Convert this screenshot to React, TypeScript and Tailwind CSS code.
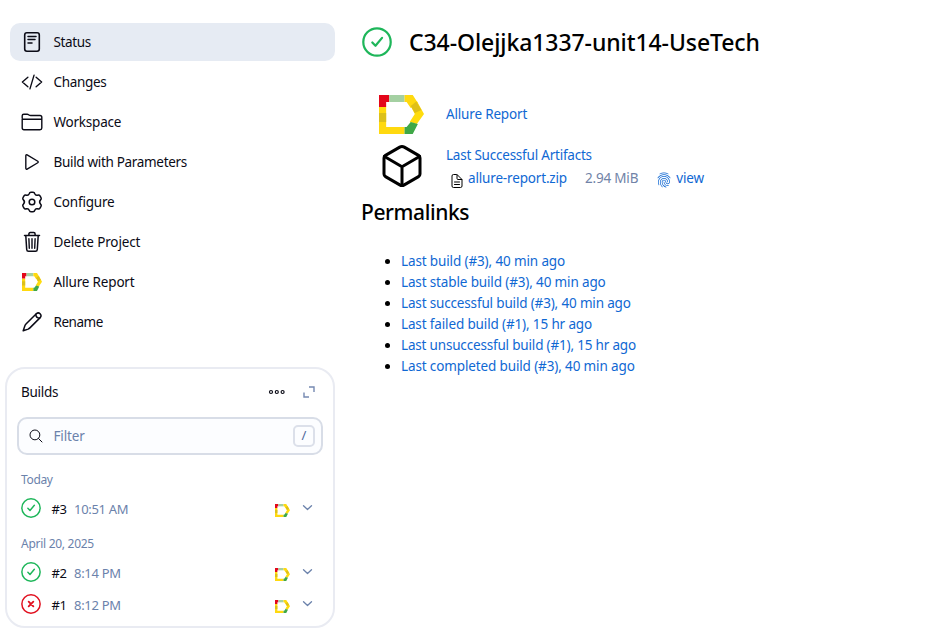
import React from "react";
import {
  IoCodeSlashOutline,
  IoCubeOutline,
  IoDocumentTextOutline,
  IoFingerPrintOutline,
  IoPlayOutline,
  IoSearchOutline,
} from "react-icons/io5";

function Allure({ className }: { className: string }) {
  return (
    <svg viewBox="0 0 44 39" className={className} preserveAspectRatio="none">
      <path d="M0 12H7V32H25V39H0Z" fill="#ffd90f" />
      <path d="M0 18H7V27H0Z" fill="#dcc01a" />
      <path d="M0 0H10V7H7V12H0Z" fill="#e3061a" />
      <path d="M10 0H25V7H10Z" fill="#a4d0a2" />
      <path d="M25 0H33L38 8L31 13L27 7H25Z" fill="#ffd90f" />
      <path d="M37 6L44 19L37 29L30 27L35 19L31 11Z" fill="#ffdc0d" />
      <path d="M36.500 6.500L41.500 15L35 18L31 11Z" fill="#dfc017" />
      <path d="M31 27L38 29L33 39H25V32H27Z" fill="#3fa847" />
    </svg>
  );
}

function Ring({ ok, className }: { ok: boolean; className: string }) {
  return (
    <svg
      viewBox="0 0 512 512"
      className={className}
      fill="none"
      stroke={ok ? "#1eb65a" : "#e1101f"}
      strokeWidth="38"
      strokeLinecap="round"
      strokeLinejoin="round"
    >
      <circle cx="256" cy="256" r="234" />
      {ok ? <path d="M342 186L230 320L176 264" /> : <path d="M316 316L196 196M196 316L316 196" strokeWidth="46" />}
    </svg>
  );
}

function StatusIcon() {
  return (
    <svg viewBox="0 0 22 22" className="size-[22px]" fill="none" stroke="currentColor" strokeLinecap="round">
      <rect x="3.700" y="1.700" width="14.600" height="18.600" rx="2.200" strokeWidth="1.600" />
      <path d="M7 5.500H15M7 8.500H14M7 12H11" strokeWidth="1.500" />
    </svg>
  );
}

function Folder() {
  return (
    <svg viewBox="0 0 22 22" className="size-[22px]" fill="none" stroke="currentColor" strokeWidth="1.400" strokeLinejoin="round">
      <path d="M1.200 7.500V4.800Q1.200 3.200 2.800 3.200H6.200Q7 3.200 7.600 3.700L8.300 4.200Q8.800 4.500 9.600 4.500H19Q20.800 4.500 20.800 6.300V17Q20.800 18.700 19 18.700H3Q1.200 18.700 1.200 17V8.200H20.800" />
    </svg>
  );
}

function Trash() {
  return (
    <svg viewBox="0 0 22 22" className="size-[22px]" fill="none" stroke="currentColor" strokeWidth="1.500" strokeLinecap="round" strokeLinejoin="round">
      <path d="M3.500 4.600H18.500M7.900 4.400V3Q7.900 1.600 9.300 1.600H12.700Q14.100 1.600 14.100 3V4.400M4.800 4.800L5.700 18.500Q5.800 20.300 7.500 20.300H14.500Q16.200 20.300 16.300 18.500L17.200 4.800" />
      <path d="M11 7.700V17.200M7.900 7.700L8.300 17.200M14.100 7.700L13.700 17.200" strokeWidth="1.400" />
    </svg>
  );
}

function Gear() {
  return (
    <svg viewBox="0 0 22 22" className="size-[22px]" fill="none" stroke="currentColor" strokeWidth="1.500" strokeLinejoin="round">
      <circle cx="11" cy="11" r="2.800" />
      <path d="M8.200 2.800Q8.600 1.300 10 1.300H12Q13.400 1.300 13.800 2.800Q14.500 4.600 16.400 4.200Q18.300 3.700 19 4.900L20 6.600Q20.700 7.900 19.600 8.900Q17.500 11 19.600 13.100Q20.700 14.100 20 15.400L19 17.100Q18.300 18.300 16.400 17.800Q14.500 17.400 13.800 19.200Q13.400 20.700 12 20.700H10Q8.600 20.700 8.200 19.200Q7.500 17.400 5.600 17.800Q3.700 18.300 3 17.100L2 15.400Q1.300 14.100 2.400 13.100Q4.500 11 2.400 8.900Q1.300 7.900 2 6.600L3 4.900Q3.700 3.700 5.600 4.200Q7.500 4.600 8.200 2.800Z" />
    </svg>
  );
}

function Pencil() {
  return (
    <svg viewBox="0 0 22 22" className="size-[22px]" fill="none" stroke="currentColor" strokeWidth="1.500" strokeLinecap="round" strokeLinejoin="round">
      <path d="M2.200 19.800L3.800 14.900Q4.200 13.800 5 13L15.300 2.700Q17.300 1 19.100 2.800Q20.900 4.600 19.200 6.600L8.900 16.900Q8.100 17.700 7.100 18.100Z" />
      <path d="M14.800 3.200Q14.800 7 18.700 7.100" />
    </svg>
  );
}

const menu = [
  { label: "Status", icon: <StatusIcon />, track: "tracking-[-0.370px]" },
  { label: "Changes", icon: <IoCodeSlashOutline className="size-[22px]" />, track: "tracking-[-0.340px]" },
  { label: "Workspace", icon: <Folder />, track: "tracking-[-0.220px]" },
  { label: "Build with Parameters", icon: <IoPlayOutline className="size-[22px]" />, track: "tracking-[-0.320px]" },
  { label: "Configure", icon: <Gear />, track: "tracking-[-0.200px]" },
  { label: "Delete Project", icon: <Trash />, track: "tracking-[-0.130px]" },
  { label: "Allure Report", icon: <Allure className="h-[18px] w-5" />, track: "tracking-[-0.180px]" },
  { label: "Rename", icon: <Pencil />, track: "tracking-[-0.460px]" },
];

const links = [
  { text: "Last build (#3), 40 min ago", track: "tracking-[-0.130px]" },
  { text: "Last stable build (#3), 40 min ago", track: "tracking-[-0.140px]" },
  { text: "Last successful build (#3), 40 min ago", track: "tracking-[-0.160px]" },
  { text: "Last failed build (#1), 15 hr ago", track: "tracking-[-0.140px]" },
  { text: "Last unsuccessful build (#1), 15 hr ago", track: "tracking-[-0.180px]" },
  { text: "Last completed build (#3), 40 min ago", track: "tracking-[-0.130px]" },
];

function Build({ ok, id, time }: { ok: boolean; id: string; time: string }) {
  return (
    <div className="flex h-8 items-center pr-5 pl-[14px]">
      <Ring ok={ok} className="mb-1 size-5" />
      <span className="ml-[10.500px] w-[22.500px] text-[13px] tracking-[-0.450px]">{id}</span>
      <span className="text-[13px] tracking-[-0.300px] text-[#6b82ab]">{time}</span>
      <Allure className="ml-auto h-[13px] w-[15px]" />
      <svg viewBox="0 0 11 11" className="mb-[5px] ml-3 size-[11px]" fill="none" stroke="#6b82ab" strokeWidth="1.300" strokeLinecap="round" strokeLinejoin="round">
        <path d="M1.500 3.700L5.500 7.500L9.500 3.700" />
      </svg>
    </div>
  );
}

export default function App() {
  return (
    <div className="flex h-[628px] w-[930px] overflow-hidden bg-white font-['Noto_Sans','Open_Sans',sans-serif] text-[13.500px] text-[#0b0b16]">
      <aside className="w-[335px] shrink-0 pt-[23px] pl-[5px]">
        <nav className="flex flex-col gap-0.5 pl-[5px]">
          {menu.map((m, i) => (
            <a key={m.label} className={`flex h-[38px] items-center rounded-[10px] pl-[11px] ${i === 0 ? "bg-[#e6ebf3]" : ""}`}>
              <span className="flex w-[22px] justify-center">{m.icon}</span>
              <span className={`ml-[10.500px] ${m.track}`}>{m.label}</span>
            </a>
          ))}
        </nav>
        <section className="mt-[26px] h-[261px] rounded-[20px] border-2 border-[#e9ebf2] text-[13px]">
          <div className="flex h-[46px] items-center pr-[18px] pl-[14px]">
            <span className="mt-px text-[13.500px] tracking-[-0.300px]">Builds</span>
            <svg viewBox="0 0 18 6" className="ml-auto h-1.5 w-[18px]" fill="none" stroke="currentColor" strokeWidth="1.200">
              <circle cx="3" cy="3" r="1.500" />
              <circle cx="8.800" cy="3" r="1.500" />
              <circle cx="14.600" cy="3" r="1.500" />
            </svg>
            <svg viewBox="0 0 12 12" className="ml-[17px] size-3" fill="none" stroke="#7589b1" strokeWidth="1.400">
              <path d="M6 1H11V6M1 6.500V11H6" />
            </svg>
          </div>
          <div className="mx-2.5 mt-0.5 flex h-[38px] items-center rounded-[10px] border-2 border-[#d8dde7] bg-[#fcfdff] pr-1.5 pl-[9px]">
            <IoSearchOutline className="size-4" />
            <span className="ml-[9.500px] text-[13.500px] tracking-[-0.150px] text-[#6b82ab]">Filter</span>
            <kbd className="ml-auto flex h-[22px] w-[22px] items-center justify-center rounded-[5px] border-2 border-[#dce0ea] font-['Noto_Sans',sans-serif] text-[13px] text-[#51689b]">/</kbd>
          </div>
          <div className="mt-4 flex h-[18px] items-center pl-[14px] text-xs tracking-[-0.350px] text-[#6b82ab]">Today</div>
          <div className="mt-[5px]"><Build ok id="#3" time="10:51 AM" /></div>
          <div className="mt-[9px] flex h-[18px] items-center pl-[14px] text-xs tracking-[-0.280px] text-[#6b82ab]">April 20, 2025</div>
          <div className="mt-[5px]">
            <Build ok id="#2" time="8:14 PM" />
            <Build ok={false} id="#1" time="8:12 PM" />
          </div>
        </section>
      </aside>
      <main className="pt-6 pl-[26px]">
        <header className="flex h-9 items-center pl-px">
          <Ring ok className="size-[30px]" />
          <h1 className="ml-[17px] text-[23px] font-[550] tracking-[-0.080px] whitespace-nowrap text-black">C34-Olejjka1337-unit14-UseTech</h1>
        </header>
        <div className="mt-[34px] flex h-10 items-center pl-[18px] text-[#1068d3]">
          <Allure className="h-[39px] w-[45px]" />
          <a className="ml-[22px] tracking-[-0.170px]">Allure Report</a>
        </div>
        <div className="mt-2 flex h-[54px] pl-[17px] text-[#1068d3]">
          <IoCubeOutline className="size-12 text-black" />
          <div className="ml-5 flex flex-col">
            <a className="mt-[3px] h-[21px] leading-[21px] tracking-[-0.220px]">Last Successful Artifacts</a>
            <div className="mt-0.5 flex h-[21px] items-center whitespace-nowrap">
              <IoDocumentTextOutline className="mt-[5px] ml-[3px] size-4 text-black" />
              <a className="ml-[3px] tracking-[-0.160px]">allure-report.zip</a>
              <span className="ml-[18px] tracking-[-0.200px] text-[#7183a7]">2.94 MiB</span>
              <IoFingerPrintOutline className="mt-[3px] ml-[18px] size-4" />
              <a className="ml-1 tracking-[-0.150px]">view</a>
            </div>
          </div>
        </div>
        <h2 className="mt-0.5 h-[30px] text-[21px] leading-[28px] font-[550] tracking-[-0.400px] text-black">Permalinks</h2>
        <ul className="mt-[23px] list-disc pl-10 leading-[21px] marker:text-black">
          {links.map((l) => (
            <li key={l.text}><a className={`text-[#1068d3] ${l.track}`}>{l.text}</a></li>
          ))}
        </ul>
      </main>
    </div>
  );
}
